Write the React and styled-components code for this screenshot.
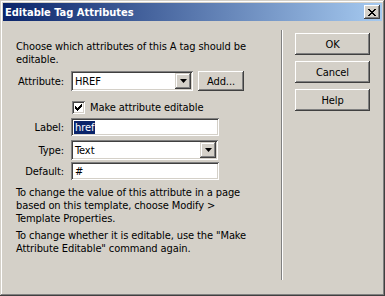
import React from 'react';
import styled, { createGlobalStyle } from 'styled-components';

const Global = createGlobalStyle`
  html, body {
    margin: 0;
    padding: 0;
    background: #d4d0c8;
  }
  * {
    box-sizing: border-box;
  }
`;

const Window = styled.div`
  width: 385px;
  height: 296px;
  padding: 3px;
  background: #d4d0c8;
  font-family: "DejaVu Sans Condensed", "Liberation Sans", Arial, sans-serif;
  font-size: 11px;
  letter-spacing: -0.1px;
  color: #000;
  box-shadow: inset -1px -1px #404040, inset 1px 1px #d4d0c8,
    inset -2px -2px #808080, inset 2px 2px #ffffff;
  display: flex;
  flex-direction: column;
`;

const TitleBar = styled.div`
  height: 18px;
  display: flex;
  align-items: center;
  justify-content: space-between;
  padding: 0 2px 0 2px;
  background: linear-gradient(to right, #0a246a, #a6caf0);
`;

const Title = styled.span`
  color: #fff;
  font-weight: bold;
  font-size: 11px;
  letter-spacing: 0;
`;

const CloseBox = styled.div`
  width: 16px;
  height: 14px;
  background: #d4d0c8;
  box-shadow: inset -1px -1px #404040, inset 1px 1px #ffffff,
    inset -2px -2px #808080;
  display: flex;
  align-items: center;
  justify-content: center;
`;

const Body = styled.div`
  flex: 1;
  display: flex;
`;

const LeftPane = styled.div`
  width: 278px;
  padding: 19px 20px 0 13px;
`;

const Separator = styled.div`
  width: 2px;
  margin: 9px 0 13px;
  border-left: 1px solid #808080;
  border-right: 1px solid #ffffff;
`;

const RightPane = styled.div`
  flex: 1;
  padding: 12px 0 0 12px;
  display: flex;
  flex-direction: column;
  gap: 6px;
`;

const Text = styled.p`
  margin: 0;
  line-height: 13px;
  margin-top: ${p => p.top || 0}px;
`;

const Row = styled.div`
  display: flex;
  align-items: center;
  margin-top: ${p => p.top || 0}px;
`;

const Label = styled.span`
  width: 48px;
  text-align: right;
  margin-right: 7px;
  white-space: nowrap;
`;

const Field = styled.div`
  width: ${p => p.w}px;
  height: ${p => p.h}px;
  flex-shrink: 0;
  background: #fff;
  box-shadow: inset 1px 1px #808080, inset -1px -1px #ffffff,
    inset 2px 2px #404040, inset -2px -2px #d4d0c8;
  display: flex;
  align-items: center;
  padding: 0 2px 0 4px;
`;

const FieldText = styled.span`
  flex: 1;
`;

const Selected = styled.span`
  background: #0a246a;
  color: #fff;
  margin-left: -1px;
  padding: 0 1px;
`;

const ArrowButton = styled.div`
  width: 16px;
  height: 16px;
  background: #d4d0c8;
  box-shadow: inset -1px -1px #404040, inset 1px 1px #d4d0c8,
    inset -2px -2px #808080, inset 2px 2px #ffffff;
  display: flex;
  align-items: center;
  justify-content: center;
`;

const Button = styled.div`
  width: ${p => p.w || 75}px;
  height: ${p => p.h || 22}px;
  flex-shrink: 0;
  margin-left: ${p => p.left || 0}px;
  background: #d4d0c8;
  box-shadow: inset -1px -1px #404040, inset 1px 1px #ffffff,
    inset -2px -2px #808080;
  display: flex;
  align-items: center;
  justify-content: center;
`;

const CheckBox = styled.div`
  width: 13px;
  height: 13px;
  margin-left: 56px;
  margin-right: 5px;
  background: #fff;
  box-shadow: inset 1px 1px #808080, inset -1px -1px #ffffff,
    inset 2px 2px #404040, inset -2px -2px #d4d0c8;
  display: flex;
  align-items: center;
  justify-content: center;
`;

const Arrow = () => (
  <svg width="7" height="4" viewBox="0 0 7 4">
    <path d="M0 0h7L3.5 4z" fill="#000" />
  </svg>
);

function Select({ w, h, value }) {
  return (
    <Field w={w} h={h} style={{ paddingRight: 2 }}>
      <FieldText>{value}</FieldText>
      <ArrowButton>
        <Arrow />
      </ArrowButton>
    </Field>
  );
}

export default function App() {
  return (
    <Window>
      <Global />
      <TitleBar>
        <Title>Editable Tag Attributes</Title>
        <CloseBox>
          <svg width="8" height="7" viewBox="0 0 8 7">
            <path d="M0 0L7 7M1 0L8 7M7 0L0 7M8 0L1 7" stroke="#000" strokeWidth="1" />
          </svg>
        </CloseBox>
      </TitleBar>
      <Body>
        <LeftPane>
          <Text>Choose which attributes of this A tag should be editable.</Text>
          <Row top={5}>
            <Label>Attribute:</Label>
            <Select w={122} h={20} value="HREF" />
            <Button w={46} h={20} left={5}>Add...</Button>
          </Row>
          <Row top={10}>
            <CheckBox>
              <svg width="7" height="7" viewBox="0 0 7 7" shapeRendering="crispEdges">
                <path d="M0 2h1v1h1v1h1v-1h1v-1h1v-1h1v-1h1v3h-1v1h-1v1h-1v1h-1v1h-1v-1h-1v-1h-1z" fill="#000" />
              </svg>
            </CheckBox>
            <span>Make attribute editable</span>
          </Row>
          <Row top={4}>
            <Label>Label:</Label>
            <Field w={148} h={18}>
              <FieldText><Selected>href</Selected></FieldText>
            </Field>
          </Row>
          <Row top={4}>
            <Label>Type:</Label>
            <Select w={147} h={20} value="Text" />
          </Row>
          <Row top={2}>
            <Label>Default:</Label>
            <Field w={148} h={18}>
              <FieldText>#</FieldText>
            </Field>
          </Row>
          <Text top={6}>
            To change the value of this attribute in a page based on this template, choose Modify &gt; Template Properties.
          </Text>
          <Text top={4}>
            To change whether it is editable, use the "Make Attribute Editable" command again.
          </Text>
        </LeftPane>
        <Separator />
        <RightPane>
          <Button>OK</Button>
          <Button>Cancel</Button>
          <Button>Help</Button>
        </RightPane>
      </Body>
    </Window>
  );
}
